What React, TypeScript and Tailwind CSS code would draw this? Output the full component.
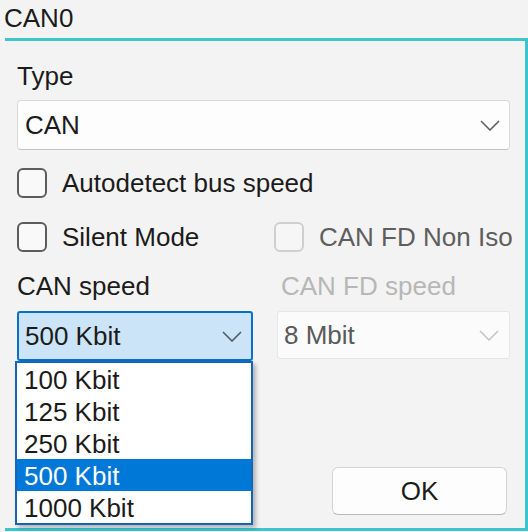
import React from 'react';

const Chevron = ({ color }: { color: string }) => (
  <svg width="20" height="11" viewBox="0 0 20 11" fill="none">
    <polyline points="1,1 10,10 19,1" stroke={color} strokeWidth="1.6" />
  </svg>
);

const CheckBox = ({ label, disabled }: { label: string; disabled?: boolean }) => (
  <div className="flex items-center h-[30px] whitespace-nowrap">
    <div
      className={`w-[30px] h-[30px] shrink-0 rounded-[6px] border-2 ${
        disabled ? 'border-[#cfcfcf] bg-[#f6f6f6]' : 'border-[#5c5c5c] bg-[#f9f9f9]'
      }`}
    />
    <span className={`ml-[15px] ${disabled ? 'text-[#5e5e5e]' : ''}`}>{label}</span>
  </div>
);

const speeds = ['100 Kbit', '125 Kbit', '250 Kbit', '500 Kbit', '1000 Kbit'];

export default function App() {
  return (
    <div className="w-[528px] h-[532px] bg-[#f3f3f3] flex flex-col font-['Liberation_Sans',Arial,sans-serif] text-[26px] leading-[30px] text-[#1b1b1b] overflow-hidden">
      <div className="h-[38px] pl-[4px] pt-[3px] shrink-0">CAN0</div>

      <div className="ml-[5px] mb-[1px] flex-1 flex flex-col border-t-[3px] border-r-[3px] border-b-[3px] border-[#3ac6cc] pl-[12px] pr-[15px]">
        <div className="mt-[20px]">Type</div>
        <div className="mt-[9px] h-[50px] flex items-center justify-between bg-[#fdfdfd] border border-[#dadada] border-b-[#c2c2c2] rounded-[4px] pl-[7px] pr-[9px]">
          <span>CAN</span>
          <Chevron color="#606060" />
        </div>

        <div className="mt-[18px]">
          <CheckBox label="Autodetect bus speed" />
        </div>

        <div className="mt-[24px] flex">
          <div className="w-[257px] shrink-0">
            <CheckBox label="Silent Mode" />
          </div>
          <CheckBox label="CAN FD Non Iso" disabled />
        </div>

        <div className="mt-[19px] flex">
          <div className="w-[236px]">CAN speed</div>
          <div className="ml-[28px] text-[#b7b7b7]">CAN FD speed</div>
        </div>

        <div className="mt-[10px] flex">
          <div className="relative w-[236px]">
            <div className="h-[50px] flex items-center justify-between bg-[#cce4f7] border-2 border-[#0a6fc9] rounded-[3px] pl-[6px] pr-[9px]">
              <span>500 Kbit</span>
              <Chevron color="#4f5a66" />
            </div>
            <div className="absolute top-full left-[-2px] w-[238px] bg-white border-2 border-[#1466b8] shadow-[3px_3px_4px_rgba(0,0,0,0.25)] z-10">
              {speeds.map((s) => (
                <div
                  key={s}
                  className={`h-[32px] pl-[7px] pt-[2px] leading-[30px] ${
                    s === '500 Kbit' ? 'bg-[#0078d7] text-white' : ''
                  }`}
                >
                  {s}
                </div>
              ))}
            </div>
          </div>
          <div className="ml-[24px] flex-1 h-[48px] flex items-center justify-between bg-[#fbfbfb] border border-[#e6e6e6] rounded-[3px] pl-[6px] pr-[10px] text-[#5a5a5a]">
            <span>8 Mbit</span>
            <Chevron color="#c6c6c6" />
          </div>
        </div>

        <div className="flex-1" />

        <div className="flex justify-end mb-[13px] mr-[3px]">
          <div className="w-[175px] h-[48px] flex items-center justify-center bg-[#fdfdfd] border border-[#d4d4d4] border-b-[#b8b8b8] rounded-[6px]">
            OK
          </div>
        </div>
      </div>
    </div>
  );
}
